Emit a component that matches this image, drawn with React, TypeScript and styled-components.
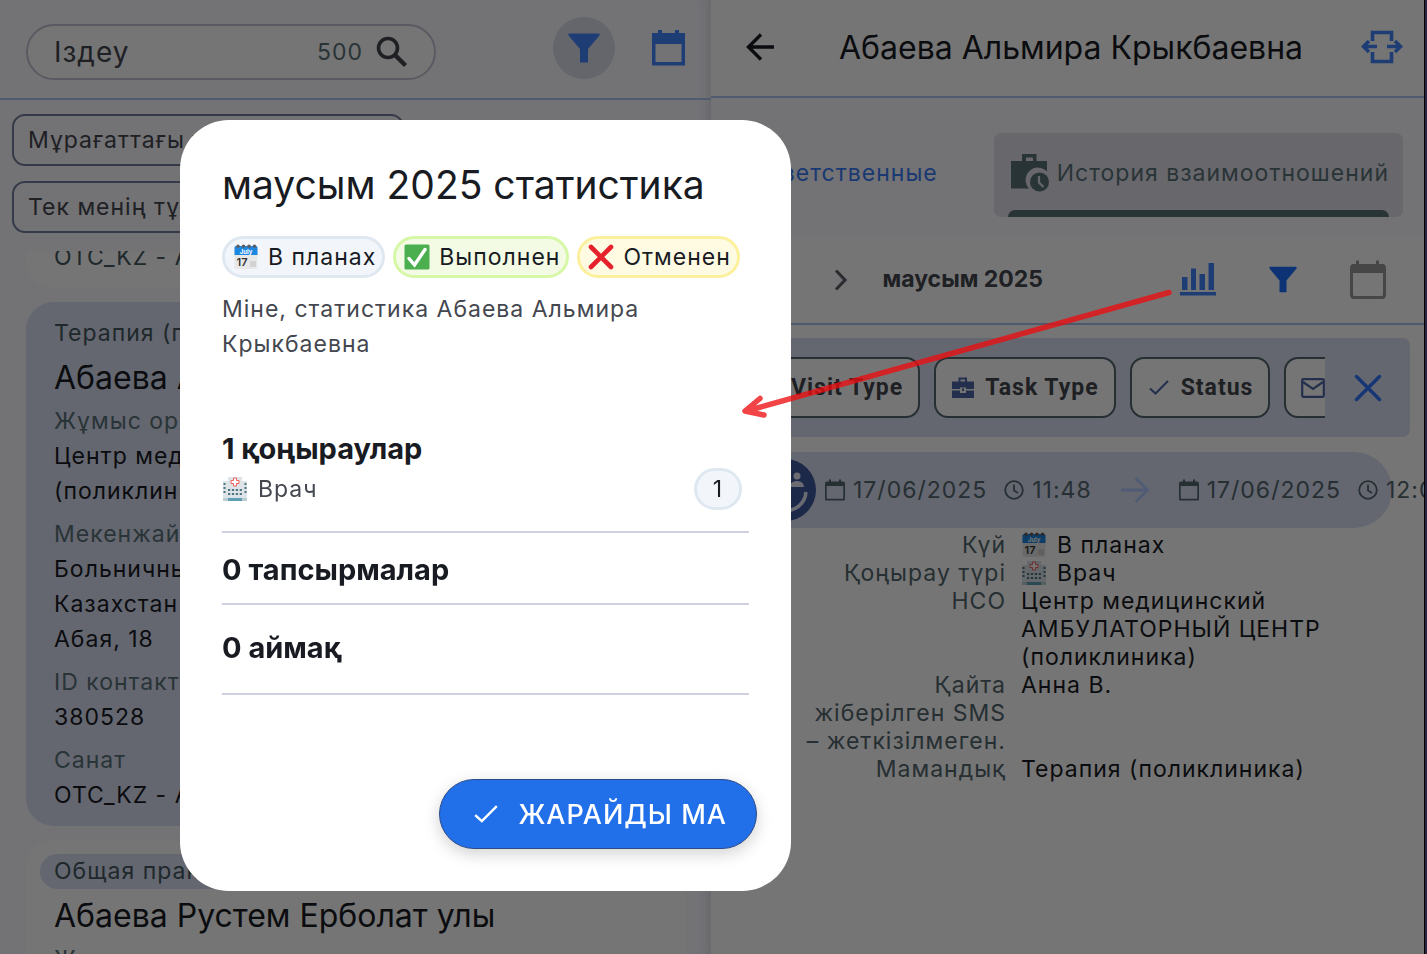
import React from 'react';
import styled, { createGlobalStyle } from 'styled-components';

const Global = createGlobalStyle`
  *, *::before, *::after { box-sizing: border-box; }
  html, body, #root { height: 100%; }
  body {
    margin: 0;
    overflow: hidden;
    background: #2b2440;
    color: #191b23;
    font: 400 23px/35px Inter, "Noto Sans", sans-serif;
    letter-spacing: 1px;
  }
  h1, h2, h3, p, ul, dl, dd { margin: 0; padding: 0; font-weight: 400; }
  button, input { font: inherit; letter-spacing: inherit; color: inherit; }
  button { padding: 0; border: 0; background: none; }
  svg { display: block; flex: none; }
`;

/* ---------- icons ---------- */

type IconProps = { w?: number; h?: number; box?: string };

const SearchIcon = () => (
  <svg width="34" height="34" viewBox="0 0 34 34" fill="none" stroke="currentColor" strokeWidth="3.600">
    <circle cx="13" cy="13" r="9.500" />
    <path d="M19.500 19.500 30.500 30.500" strokeWidth="4.400" />
  </svg>
);

const FunnelIcon = ({ w = 32, h = 30 }: IconProps) => (
  <svg width={w} height={h} viewBox="0 0 32 30" fill="currentColor">
    <path d="M.5.5h31v2L20 16v13.5h-8V16L.5 2.5z" />
  </svg>
);

const CalendarSolidIcon = () => (
  <svg width="33" height="36" viewBox="0 0 33 36" fill="currentColor">
    <path fillRule="evenodd" d="M0 3h6V0h4v3h13V0h4v3h6v32.500H0zM3.500 14v18h26V14z" />
  </svg>
);

const BackIcon = () => (
  <svg width="28" height="28" viewBox="0 0 28 28" fill="none" stroke="currentColor" strokeWidth="3.400">
    <path d="M28 14H3M15 1.500 2.500 14 15 26.500" />
  </svg>
);

const ExpandIcon = () => (
  <svg width="42" height="34" viewBox="0 0 42 34" fill="none" stroke="currentColor" strokeWidth="3.600">
    <path d="M11.500 11V2.500h19V11M11.500 22v9.500h19V22" />
    <path d="M16 16.500H3M26 16.500h13M8 11l-5.500 5.500L8 22M34 11l5.500 5.500L34 22" />
  </svg>
);

const CaseClockIcon = () => (
  <svg width="38" height="38" viewBox="0 0 38 38" fill="currentColor">
    <path fillRule="evenodd" d="M11 0h14.500v7H36v10.500A11 11 0 0 0 18 34.500H0V7h11zm4 3.500V7h7V3.500z" />
    <circle cx="28.500" cy="28" r="9.500" />
    <path d="M28 22v6.500l4.500 4.500" stroke="#dfe1ea" strokeWidth="2.200" fill="none" />
  </svg>
);

const ChevronIcon = () => (
  <svg width="14" height="22" viewBox="0 0 14 22" fill="none" stroke="currentColor" strokeWidth="3.200">
    <path d="M2 1.500 11 11 2 20.500" />
  </svg>
);

const ChartIcon = () => (
  <svg width="36" height="33" viewBox="0 0 36 33" fill="currentColor">
    <path d="M2 14h5.500v13H2zM11 5.500h5V27h-5zM19.500 11H25v16h-5.500zM28.500 0H34v27h-5.500zM0 29h36v3.500H0z" />
  </svg>
);

const CalendarOutlineIcon = () => (
  <svg width="36" height="40" viewBox="0 0 36 40" fill="currentColor">
    <path fillRule="evenodd" d="M4 4h2V.500h3V4h17V.500h3V4h3a4 4 0 0 1 4 4v27a4 4 0 0 1-4 4H4a4 4 0 0 1-4-4V8a4 4 0 0 1 4-4zM3 13v21.500A1.500 1.500 0 0 0 4.500 36h27a1.500 1.500 0 0 0 1.500-1.500V13z" />
  </svg>
);

const CalendarSmallIcon = () => (
  <svg width="20" height="22" viewBox="0 0 20 22" fill="currentColor">
    <path fillRule="evenodd" d="M2 2.500h2V.500h2v2h8v-2h2v2h2a2 2 0 0 1 2 2V20a1.500 1.500 0 0 1-1.500 1.500h-17A1.500 1.500 0 0 1 0 20V4.500a2 2 0 0 1 2-2zM1.700 7v12.800h16.600V7z" />
  </svg>
);

const ClockIcon = () => (
  <svg width="20" height="20" viewBox="0 0 20 20" fill="none" stroke="currentColor" strokeWidth="1.800">
    <circle cx="10" cy="10" r="8.800" />
    <path d="M10 4.500V10.500l4 2.500" />
  </svg>
);

const BriefcaseIcon = () => (
  <svg width="24" height="22" viewBox="0 0 24 22" fill="currentColor">
    <path fillRule="evenodd" d="M7.500.500h8.500v4H23V12h-8v-1.500H9V12H1V4.500h6.500zm2 2v2h4.500v-2z" />
    <path d="M1 13.500h8V16h6v-2.500h8V21H1z" />
    <path d="M11 11.500h2v2.500h-2z" />
  </svg>
);

const CheckIcon = ({ w = 24, h = 15, box = '-2 0 24 15' }: IconProps) => (
  <svg width={w} height={h} viewBox={box} fill="none" stroke="currentColor" strokeWidth="2">
    <path d="M1 8.500 6.500 13.500 19 1" />
  </svg>
);

const MailIcon = () => (
  <svg width="24" height="20" viewBox="0 0 24 20" fill="none" stroke="currentColor" strokeWidth="2.200">
    <rect x="1.200" y="1.200" width="21.600" height="17.600" rx="1" />
    <path d="m2 4 10 7 10-7" />
  </svg>
);

const CloseIcon = () => (
  <svg width="28" height="28" viewBox="0 0 28 28" fill="none" stroke="currentColor" strokeWidth="3.400" strokeLinecap="round">
    <path d="M2.500 2.500l23 23M25.500 2.500l-23 23" />
  </svg>
);

const ForwardIcon = () => (
  <svg width="28" height="28" viewBox="0 0 28 28" fill="none" stroke="currentColor" strokeWidth="3">
    <path d="M0 14h26M14.500 2 26.500 14l-12 12" />
  </svg>
);

const AvatarIcon = () => (
  <svg width="62" height="62" viewBox="0 0 62 62">
    <circle cx="31" cy="31" r="31" fill="#3f5aa0" />
    <g fill="#e7ebf9">
      <circle cx="15" cy="17" r="3.500" />
      <circle cx="43" cy="17" r="3.500" />
      <path d="M8 28c0-8 14-8 14 0zM36 28c0-8 14-8 14 0z" />
    </g>
    <path d="M9 33c2 25 41 25 43 0" fill="none" stroke="#e7ebf9" strokeWidth="3.500" />
  </svg>
);

const DateEmoji = () => (
  <svg width="26" height="26" viewBox="0 0 26 26">
    <rect x="1.500" y="2" width="23" height="23" rx="1.500" fill="#e8e8e8" />
    <path d="M1.500 3.500A1.500 1.500 0 0 1 3 2h20a1.500 1.500 0 0 1 1.500 1.500V11h-23z" fill="#1e87e0" />
    <g fill="#5b5f66">
      <circle cx="5" cy="2.300" r="1.800" /><circle cx="10.500" cy="2.300" r="1.800" />
      <circle cx="16" cy="2.300" r="1.800" /><circle cx="21.500" cy="2.300" r="1.800" />
    </g>
    <text x="13" y="9.500" textAnchor="middle" fontSize="6" fontWeight="700" letterSpacing="0" fill="#fff">July</text>
    <text x="9" y="22" textAnchor="middle" fontSize="11" fontWeight="600" letterSpacing="0" fill="#333">17</text>
    <path d="M17 17h6v6h-6z" fill="#d2d2d2" />
  </svg>
);

const DoneEmoji = () => (
  <svg width="26" height="26" viewBox="0 0 26 26">
    <rect x=".500" y=".500" width="25" height="25" rx="1.500" fill="#4caf4f" />
    <path d="M5 14.500 10.500 21 21 5.500" fill="none" stroke="#fff" strokeWidth="3.400" strokeLinecap="round" />
  </svg>
);

const CrossEmoji = () => (
  <svg width="26" height="26" viewBox="0 0 26 26">
    <path d="M3 3l20 20M23 3 3 23" stroke="#e5222b" strokeWidth="4.600" strokeLinecap="round" />
  </svg>
);

const HospitalEmoji = () => (
  <svg width="26" height="26" viewBox="0 0 26 26">
    <path d="M6 1h14v4h5v20H1V5h5z" fill="#dde3e6" />
    <path d="M1 22h24v3H1z" fill="#b9cdd3" />
    <path d="M6 22h14v3H6z" fill="#5f9fb4" />
    <path d="M11.500 2h3v2.500H17v3h-2.500V10h-3V7.500H9v-3h2.500z" fill="#fff" stroke="#f0605c" />
    <path d="M2.500 7v12M23.500 7v12" stroke="#4c7480" strokeWidth="2" strokeDasharray="2 2" />
    <path d="M6 14h14M6 18h14" stroke="#4c7480" strokeWidth="2.200" strokeDasharray="2.200 1.700" />
  </svg>
);

/* ---------- shell ---------- */

const Shell = styled.div`
  display: grid;
  grid-template-columns: 711fr 713fr;
  height: 100vh;
  margin-right: 2px;
  border-right: 1px solid #000;
  background: #fff;
`;

const Pane = styled.section`
  display: flex;
  flex-direction: column;
  min-width: 0;
  min-height: 0;
  overflow: hidden;
`;

const ListPane = styled(Pane)`
  background: #faf8ff;
  box-shadow: inset -12px 0 12px -10px #d9d7e2;
`;

const IconButton = styled.button<{ $tone?: string; $active?: boolean }>`
  display: grid;
  place-items: center;
  flex: none;
  width: 62px;
  height: 62px;
  border-radius: 50%;
  color: ${(p) => p.$tone ?? '#4486ff'};
  background: ${(p) => (p.$active ? '#dcdfe9' : 'none')};
`;

/* ---------- client list ---------- */

const ListHeader = styled.header`
  display: flex;
  align-items: center;
  flex: none;
  gap: 22px;
  height: 100px;
  padding: 0 12px 2px 26px;
  border-bottom: 2px solid #b4c5f5;
`;

const SearchBox = styled.label`
  display: flex;
  align-items: center;
  gap: 12px;
  width: 410px;
  height: 56px;
  margin-right: auto;
  margin-top: 8px;
  padding: 0 25px 0 26px;
  border: 2px solid #c4c6d6;
  border-radius: 28px;
  background: #fff;
  color: #44474f;
`;

const SearchInput = styled.input`
  flex: 1;
  min-width: 0;
  padding: 0;
  border: 0;
  outline: 0;
  background: none;
  font-size: 28px;
  &::placeholder { color: #44474f; opacity: 1; }
`;

const Count = styled.span`
  color: #5b7179;
`;

const QuickFilters = styled.div`
  display: flex;
  flex-direction: column;
  align-items: flex-start;
  flex: none;
  gap: 15px;
  height: 151px;
  padding: 14px 12px 0;
`;

const QuickChip = styled.button`
  width: 392px;
  height: 52px;
  padding: 0 14px;
  border: 2px solid #757fa0;
  border-radius: 13px;
  text-align: left;
  white-space: nowrap;
  color: #44474f;
`;

const CardList = styled.ul`
  display: flex;
  flex-direction: column;
  flex: 1;
  gap: 14px;
  min-height: 0;
  margin: 0;
  padding: 0 26px;
  overflow: hidden;
  list-style: none;
`;

const Card = styled.li<{ $selected?: boolean; $scrolled?: boolean }>`
  flex: none;
  margin-top: ${(p) => (p.$scrolled ? '-25px' : '0')};
  padding: 14px 14px 13px;
  border-radius: 28px;
  background: ${(p) => (p.$selected ? '#dae0f4' : '#fff')};
`;

const Tag = styled.p`
  width: fit-content;
  padding: 0 14px;
  border-radius: 18px;
  background: #dae0f4;
  color: #44585f;
`;

const ClientName = styled.h3`
  padding: 0 14px;
  font-size: 32px;
  line-height: 53px;
  letter-spacing: 0;
`;

const Facts = styled.dl`
  display: flex;
  flex-direction: column;
  gap: 8px;
  padding: 0 14px;
`;

const FactName = styled.dt`
  color: #5b7179;
`;

const FactText = styled.dd`
  white-space: nowrap;
`;

const MutedText = styled(FactText)`
  color: #44585f;
`;

/* ---------- client details ---------- */

const DetailHeader = styled.header`
  display: flex;
  align-items: center;
  flex: none;
  height: 98px;
  padding: 0 11px 2px 18px;
  border-bottom: 2px solid #b4c5f5;
`;

const DetailTitle = styled.h1`
  flex: 1;
  text-align: center;
  font-size: 32px;
  letter-spacing: 0;
  white-space: nowrap;
`;

const Tabs = styled.nav`
  display: flex;
  justify-content: flex-end;
  flex: none;
  gap: 42px;
  height: 138px;
  padding: 35px 21px 0;
  background: #faf8ff;
`;

const TabLink = styled.a<{ $current?: boolean }>`
  display: flex;
  flex-direction: column;
  justify-content: flex-end;
  height: 84px;
  padding: 0 14px;
  border-radius: 7px;
  color: ${(p) => (p.$current ? '#5b7179' : '#3a7cf8')};
  background: ${(p) => (p.$current ? '#e2e3ec' : 'none')};
  text-decoration: none;
  white-space: nowrap;
`;

const TabBody = styled.span`
  display: flex;
  align-items: center;
  gap: 8px;
  height: 74px;
  padding-left: 3px;
`;

const TabBar = styled.span<{ $current?: boolean }>`
  height: 7px;
  border-radius: 7px 7px 0 0;
  background: ${(p) => (p.$current ? '#5b7179' : 'none')};
`;

const MonthRow = styled.div`
  display: flex;
  align-items: center;
  justify-content: flex-end;
  flex: none;
  gap: 23px;
  height: 89px;
  padding-right: 25px;
  border-bottom: 2px solid #a9c4f0;
`;

const MonthName = styled.h2`
  margin: 0 101px 0 -12px;
  font-weight: 700;
  font-size: 23px;
  letter-spacing: 0;
  color: #44474f;
`;

const FilterBar = styled.div`
  display: flex;
  align-items: center;
  flex: none;
  gap: 12px;
  height: 99px;
  margin: 13px 14px 15px;
  padding: 0 11px 0 15px;
  border-radius: 7px;
  background: #dae0f4;
`;

const FilterStrip = styled.div`
  display: flex;
  flex: 1;
  gap: 14px;
  min-width: 0;
  overflow: hidden;
`;

const FilterChip = styled.button`
  display: flex;
  align-items: center;
  flex: none;
  gap: 10px;
  height: 61px;
  padding: 0 15px;
  border: 2px solid #53666e;
  border-radius: 14px;
  background: #fff;
  color: #44474f;
  font-family: Roboto, Inter, sans-serif;
  font-weight: 700;
  svg { color: #5068a8; }
`;

const Visit = styled.div`
  display: flex;
  align-items: center;
  flex: none;
  height: 76px;
  margin: 0 32px 3px 29px;
  padding-left: 14px;
  border-radius: 38px;
  background: #dae0f4;
  color: #53666e;
  white-space: nowrap;
`;

const Moment = styled.time`
  display: flex;
  align-items: center;
  flex: none;
  gap: 8px;
  margin-left: 9px;
  > svg:nth-of-type(2) { margin-left: 9px; }
`;

const ArrowSlot = styled.span`
  flex: none;
  margin: 0 21px 0 29px;
  color: #b0c6ff;
`;

const VisitFacts = styled.dl`
  display: grid;
  grid-template-columns: 203px minmax(0, 1fr);
  column-gap: 15px;
  margin: 0 32px 0 92px;
  line-height: 28px;
`;

const VisitFactName = styled.dt`
  text-align: right;
  color: #53666e;
`;

const VisitFactText = styled.dd`
  display: flex;
  align-items: center;
  align-self: start;
  gap: 10px;
`;

/* ---------- statistics dialog ---------- */

const Backdrop = styled.div`
  position: fixed;
  inset: 0 2px 0 0;
  padding: 120px 0 0 180px;
  background: rgba(0, 0, 0, 0.54);
`;

const Dialog = styled.div`
  display: flex;
  flex-direction: column;
  width: 611px;
  padding: 40px 42px 42px;
  border-radius: 49px;
  background: #fff;
`;

const DialogTitle = styled.h2`
  font-size: 39px;
  line-height: 50px;
  letter-spacing: 0;
  white-space: nowrap;
`;

const Legend = styled.div`
  display: flex;
  gap: 8px;
  margin: 26px 0 14px;
`;

const Badge = styled.span<{ $edge: string; $fill: string; $round?: boolean }>`
  display: flex;
  align-items: center;
  gap: 9px;
  height: 42px;
  padding: ${(p) => (p.$round ? '0 16px' : '0 6px 0 8px')};
  border: 3px solid ${(p) => p.$edge};
  border-radius: 21px;
  background: ${(p) => p.$fill};
  color: #191b23;
  white-space: nowrap;
`;

const Intro = styled.p`
  margin-bottom: 68px;
  color: #44474f;
`;

const Group = styled.section<{ $top: number; $bottom: number }>`
  padding: ${(p) => p.$top}px 0 ${(p) => p.$bottom}px;
  border-bottom: 2px solid #cfcfe2;
`;

const GroupTitle = styled.h3`
  font-weight: 700;
  font-size: 29px;
  line-height: 38px;
  letter-spacing: 0;
`;

const GroupRow = styled.div`
  display: flex;
  align-items: center;
  justify-content: space-between;
  padding-right: 7px;
  color: #44474f;
`;

const WithIcon = styled.span`
  display: flex;
  align-items: center;
  gap: 10px;
`;

const ConfirmButton = styled.button`
  display: flex;
  align-items: center;
  align-self: flex-end;
  gap: 20px;
  height: 70px;
  margin: 84px -8px 0 0;
  padding: 0 29px 0 34px;
  border: 1px solid #2b4a86;
  border-radius: 35px;
  background: #2170ea;
  box-shadow: 0 5px 16px rgba(0, 0, 0, 0.18);
  color: #fff;
  font-weight: 500;
  font-size: 27px;
  white-space: nowrap;
`;

const Pointer = styled.svg`
  position: fixed;
  top: 280px;
  left: 736px;
  pointer-events: none;
`;

const clientFacts: { name: string; lines: string[] }[] = [
  { name: 'Жұмыс орны', lines: ['Центр медицинский', '(поликлиника)'] },
  { name: 'Мекенжай', lines: ['Больничный', 'Казахстан', 'Абая, 18'] },
  { name: 'ID контакт', lines: ['380528'] },
  { name: 'Санат', lines: ['OTC_KZ - A'] },
];

export default function App() {
  return (
    <>
      <Global />
      <Shell>
        <ListPane>
          <ListHeader>
            <SearchBox>
              <SearchInput placeholder="Іздеу" aria-label="Іздеу" />
              <Count>500</Count>
              <SearchIcon />
            </SearchBox>
            <IconButton $active aria-label="Сүзгі"><FunnelIcon /></IconButton>
            <IconButton aria-label="Күнтізбе"><CalendarSolidIcon /></IconButton>
          </ListHeader>
          <QuickFilters>
            <QuickChip>Мұрағаттағы тұтынушылар</QuickChip>
            <QuickChip>Тек менің тұтынушыларым</QuickChip>
          </QuickFilters>
          <CardList>
            <Card $scrolled>
              <Facts><MutedText>OTC_KZ - A</MutedText></Facts>
            </Card>
            <Card $selected>
              <Tag>Терапия (поликлиника)</Tag>
              <ClientName>Абаева Альмира Крыкбаевна</ClientName>
              <Facts>
                {clientFacts.map(({ name, lines }) => (
                  <div key={name}>
                    <FactName>{name}</FactName>
                    {lines.map((line) => <FactText key={line}>{line}</FactText>)}
                  </div>
                ))}
              </Facts>
            </Card>
            <Card>
              <Tag>Общая практика</Tag>
              <ClientName>Абаева Рустем Ерболат улы</ClientName>
              <Facts><FactName>Жұмыс орны</FactName></Facts>
            </Card>
          </CardList>
        </ListPane>

        <Pane>
          <DetailHeader>
            <IconButton $tone="#191b23" aria-label="Артқа"><BackIcon /></IconButton>
            <DetailTitle>Абаева Альмира Крыкбаевна</DetailTitle>
            <IconButton aria-label="Кеңейту"><ExpandIcon /></IconButton>
          </DetailHeader>
          <Tabs>
            <TabLink href="#responsible">
              <TabBody>Ответственные</TabBody>
              <TabBar />
            </TabLink>
            <TabLink href="#history" $current>
              <TabBody><CaseClockIcon />История взаимоотношений</TabBody>
              <TabBar $current />
            </TabLink>
          </Tabs>
          <MonthRow>
            <IconButton $tone="#5f636d" aria-label="Келесі ай"><ChevronIcon /></IconButton>
            <MonthName>маусым 2025</MonthName>
            <IconButton aria-label="Статистика"><ChartIcon /></IconButton>
            <IconButton $tone="#1e70ff" aria-label="Сүзгі"><FunnelIcon w={28} h={29} /></IconButton>
            <IconButton $tone="#98989c" aria-label="Күнтізбе"><CalendarOutlineIcon /></IconButton>
          </MonthRow>
          <FilterBar>
            <FilterStrip>
              <FilterChip><BriefcaseIcon />Visit Type</FilterChip>
              <FilterChip><BriefcaseIcon />Task Type</FilterChip>
              <FilterChip><CheckIcon />Status</FilterChip>
              <FilterChip aria-label="Mail"><MailIcon /></FilterChip>
            </FilterStrip>
            <IconButton $tone="#2f74ff" aria-label="Жабу"><CloseIcon /></IconButton>
          </FilterBar>
          <Visit>
            <AvatarIcon />
            <Moment><CalendarSmallIcon />17/06/2025<ClockIcon />11:48</Moment>
            <ArrowSlot><ForwardIcon /></ArrowSlot>
            <Moment><CalendarSmallIcon />17/06/2025<ClockIcon />12:03</Moment>
          </Visit>
          <VisitFacts>
            <VisitFactName>Күй</VisitFactName>
            <VisitFactText><DateEmoji />В планах</VisitFactText>
            <VisitFactName>Қоңырау түрі</VisitFactName>
            <VisitFactText><HospitalEmoji />Врач</VisitFactText>
            <VisitFactName>НСО</VisitFactName>
            <VisitFactText>Центр медицинский АМБУЛАТОРНЫЙ ЦЕНТР (поликлиника)</VisitFactText>
            <VisitFactName>Қайта жіберілген SMS – жеткізілмеген.</VisitFactName>
            <VisitFactText>Анна В.</VisitFactText>
            <VisitFactName>Мамандық</VisitFactName>
            <VisitFactText>Терапия (поликлиника)</VisitFactText>
          </VisitFacts>
        </Pane>
      </Shell>

      <Backdrop>
        <Dialog role="dialog" aria-labelledby="stats-title">
          <DialogTitle id="stats-title">маусым 2025 статистика</DialogTitle>
          <Legend>
            <Badge $edge="#dfe8f0" $fill="#f2f6fb"><DateEmoji />В планах</Badge>
            <Badge $edge="#d6f7a6" $fill="#f3fbe4"><DoneEmoji />Выполнен</Badge>
            <Badge $edge="#fdf09c" $fill="#fffbe2"><CrossEmoji />Отменен</Badge>
          </Legend>
          <Intro>Міне, статистика Абаева Альмира Крыкбаевна</Intro>
          <Group $top={0} $bottom={21}>
            <GroupTitle>1 қоңыраулар</GroupTitle>
            <GroupRow>
              <WithIcon><HospitalEmoji />Врач</WithIcon>
              <Badge $round $edge="#dfe8f0" $fill="#f2f6fb">1</Badge>
            </GroupRow>
          </Group>
          <Group $top={18} $bottom={14}>
            <GroupTitle>0 тапсырмалар</GroupTitle>
          </Group>
          <Group $top={24} $bottom={26}>
            <GroupTitle>0 аймақ</GroupTitle>
          </Group>
          <ConfirmButton><CheckIcon w={24} h={18} box="0 0 20 15" />ЖАРАЙДЫ МА</ConfirmButton>
        </Dialog>
      </Backdrop>

      <Pointer width="440" height="140" viewBox="0 0 440 140" aria-hidden="true">
        <path
          d="M433 12.500 14 130M24 118.500 9 131l19 4"
          fill="none"
          stroke="#ee0c0e"
          strokeOpacity="0.77"
          strokeWidth="5.500"
          strokeLinecap="round"
          strokeLinejoin="round"
        />
      </Pointer>
    </>
  );
}
